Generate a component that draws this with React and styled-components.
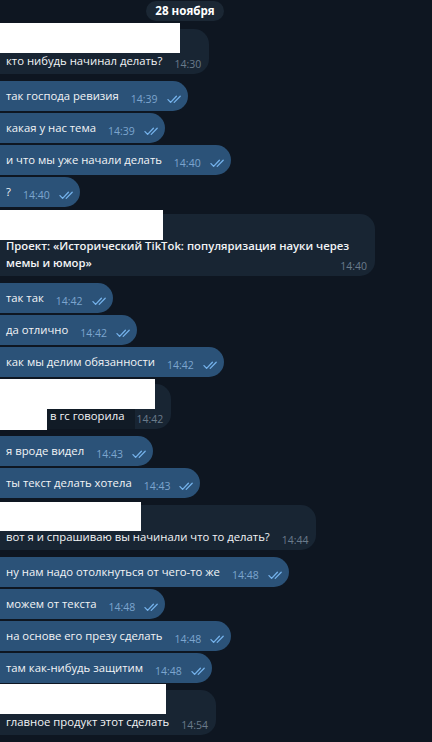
import React from "react";
import styled, { createGlobalStyle } from "styled-components";

const GlobalStyle = createGlobalStyle`
  html, body {
    margin: 0;
    padding: 0;
    background: #0e1621;
  }
  body {
    font-family: "Open Sans", "Noto Sans", sans-serif;
  }
`;

const Screen = styled.div`
  width: 432px;
  height: 742px;
  overflow: hidden;
  box-sizing: border-box;
  padding-top: 1px;
  background: #0e1621;
  display: flex;
  flex-direction: column;
`;

const DateRow = styled.div`
  display: flex;
  justify-content: center;
  padding-right: 62px;
  margin-bottom: 8px;
`;

const DatePill = styled.div`
  height: 20px;
  padding: 0 9px;
  border-radius: 10px;
  background: #1b2734;
  color: #ffffff;
  font-size: 11.6px;
  font-weight: 700;
  line-height: 20px;
`;

const Feed = styled.div`
  display: flex;
  flex-direction: column;
  align-items: flex-start;
  gap: 7px;
`;

const Group = styled.div`
  display: flex;
  flex-direction: column;
  align-items: flex-start;
  gap: 2px;
`;

const Bubble = styled.div`
  position: relative;
  max-width: 361px;
  padding: ${(p) => (p.$in ? "6px 8px 5px 6px" : "6px 6px 7px 6px")};
  background: ${(p) => (p.$in ? "#182533" : "#2b5278")};
  border-radius: 0 15px 15px 0;
  color: #f2f4f6;
  font-size: 11.3px;
  line-height: 17px;
`;

const NameLine = styled.div`
  height: 17px;
`;

const Body = styled.div`
  position: relative;
  z-index: 1;
  padding-left: ${(p) => p.$indent || 0}px;
  font-weight: ${(p) => (p.$bold ? 600 : 400)};
`;

const Meta = styled.span`
  float: right;
  display: flex;
  align-items: center;
  gap: 9px;
  height: 17px;
  margin: 4px 0 -4px 12px;
  font-size: 10.5px;
  font-weight: 400;
  color: ${(p) => (p.$in ? "#6a7b8b" : "#7ca5ce")};
`;

const Redact = styled.div`
  position: absolute;
  left: ${(p) => p.$left || 0}px;
  top: ${(p) => p.$top}px;
  width: ${(p) => p.$w}px;
  height: ${(p) => p.$h}px;
  background: ${(p) => (p.$dark ? "#111b26" : "#ffffff")};
  z-index: ${(p) => (p.$dark ? 0 : 2)};
`;

const Checks = () => (
  <svg width="15" height="9" viewBox="0 0 15 9" fill="none">
    <path d="M1 4.6L3.6 7.4L9.4 1.2" stroke="#74b1ea" strokeWidth="1.3" strokeLinecap="round" strokeLinejoin="round" />
    <path d="M7.2 7.4L13.2 1.2" stroke="#74b1ea" strokeWidth="1.3" strokeLinecap="round" />
  </svg>
);

const feed = [
  {
    in: true,
    redact: [{ top: -6, w: 180, h: 30 }],
    items: [{ text: "кто нибудь начинал делать?", time: "14:30" }],
  },
  {
    items: [
      { text: "так господа ревизия", time: "14:39" },
      { text: "какая у нас тема", time: "14:39" },
      { text: "и что мы уже начали делать", time: "14:40" },
      { text: "?", time: "14:40" },
    ],
  },
  {
    in: true,
    bold: true,
    redact: [{ top: -4, w: 163, h: 30 }],
    items: [
      {
        text: "Проект: «Исторический TikTok: популяризация науки через мемы и юмор»",
        time: "14:40",
      },
    ],
  },
  {
    items: [
      { text: "так так", time: "14:42" },
      { text: "да отлично", time: "14:42" },
      { text: "как мы делим обязанности", time: "14:42" },
    ],
  },
  {
    in: true,
    indent: 44,
    redact: [
      { top: -5, w: 155, h: 30 },
      { top: 25, w: 47, h: 21 },
      { top: 25, left: 47, w: 88, h: 20, dark: true },
    ],
    items: [{ text: "в гс говорила", time: "14:42" }],
  },
  {
    items: [
      { text: "я вроде видел", time: "14:43" },
      { text: "ты текст делать хотела", time: "14:43" },
    ],
  },
  {
    in: true,
    redact: [{ top: -3, w: 141, h: 29 }],
    items: [{ text: "вот я и спрашиваю вы начинали что то делать?", time: "14:44" }],
  },
  {
    items: [
      { text: "ну нам надо отолкнуться от чего-то же", time: "14:48" },
      { text: "можем от текста", time: "14:48" },
      { text: "на основе его презу сделать", time: "14:48" },
      { text: "там как-нибудь защитим", time: "14:48" },
    ],
  },
  {
    in: true,
    redact: [{ top: -6, w: 166, h: 30 }],
    items: [{ text: "главное продукт этот сделать", time: "14:54" }],
  },
];

export default function App() {
  return (
    <Screen>
      <GlobalStyle />
      <DateRow>
        <DatePill>28 ноября</DatePill>
      </DateRow>
      <Feed>
        {feed.map((group, gi) => (
          <Group key={gi}>
            {group.items.map((m, i) => (
              <Bubble key={i} $in={group.in}>
                {group.in && <NameLine />}
                <Body $indent={group.indent} $bold={group.bold}>
                  {m.text}
                  <Meta $in={group.in}>
                    {m.time}
                    {!group.in && <Checks />}
                  </Meta>
                </Body>
                {group.redact &&
                  group.redact.map((r, ri) => (
                    <Redact key={ri} $top={r.top} $left={r.left} $w={r.w} $h={r.h} $dark={r.dark} />
                  ))}
              </Bubble>
            ))}
          </Group>
        ))}
      </Feed>
    </Screen>
  );
}
